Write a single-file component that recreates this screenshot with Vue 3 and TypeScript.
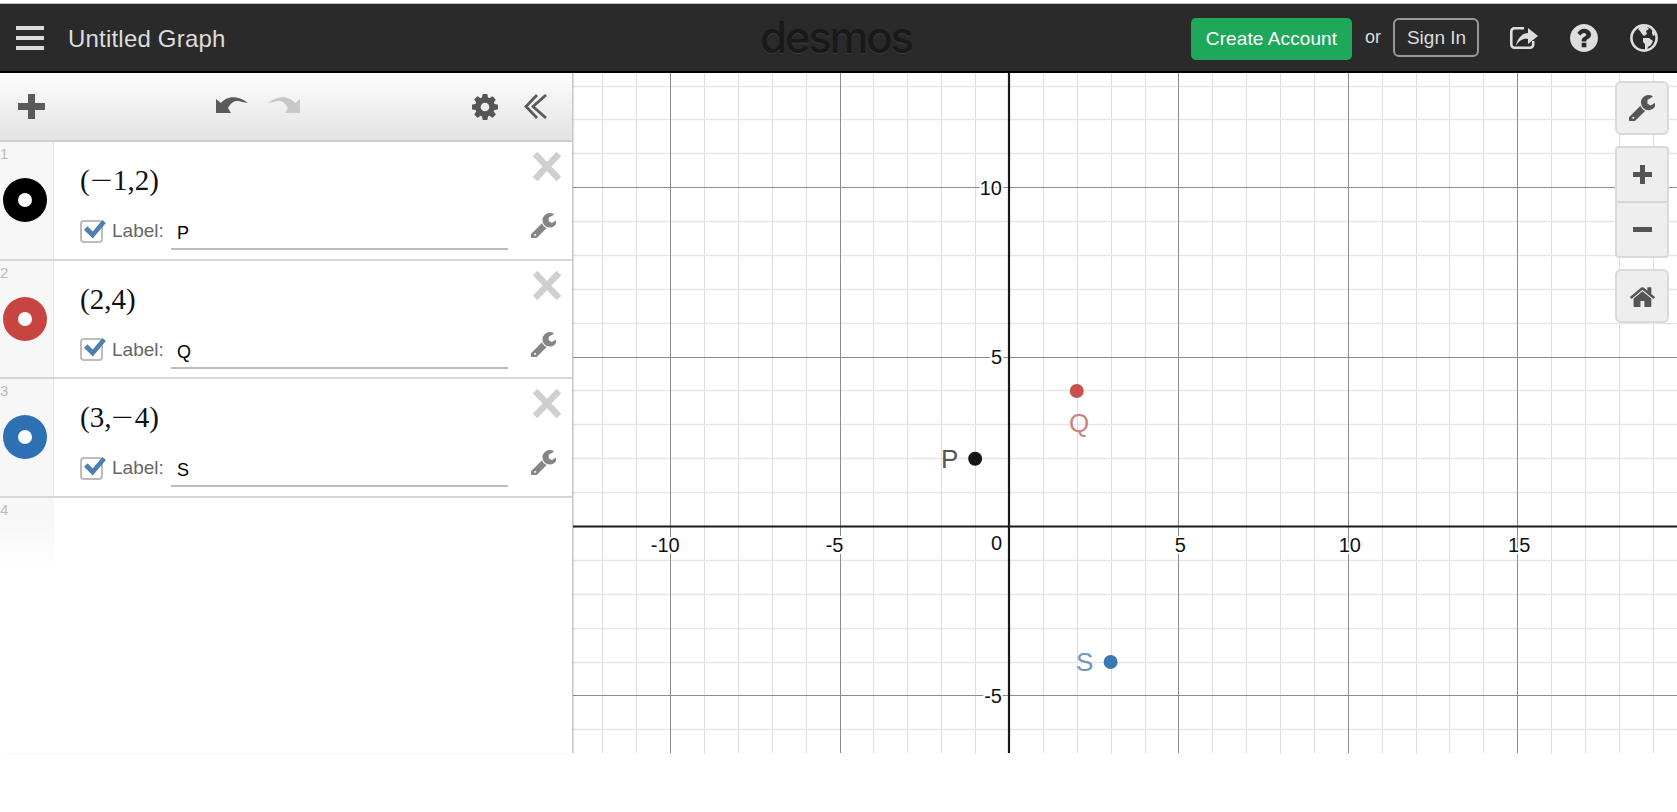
<script setup lang="ts">
interface Row { n: number; color: string; before: string; neg: boolean; after: string; label: string }
const rows: Row[] = [
  { n: 1, color: '#000000', before: '(', neg: true, after: '1,2)', label: 'P' },
  { n: 2, color: '#c74440', before: '(2,4)', neg: false, after: '', label: 'Q' },
  { n: 3, color: '#2d70b3', before: '(3,', neg: true, after: '4)', label: 'S' },
]
const WRENCH = 'M448 1472q0-26-19-45t-45-19-45 19-19 45 19 45 45 19 45-19 19-45zm644-420l-682 682q-37 37-90 37-52 0-91-37l-106-108q-38-36-38-90 0-53 38-91l681-681q39 98 114.5 173.5t173.5 114.5zm634-435q0 39-23 106-47 134-164.5 217.5t-258.5 83.5q-185 0-316.5-131.5t-131.5-316.5 131.5-316.5 316.5-131.5q58 0 121.5 16.5t107.5 46.5q16 11 16 28t-16 28l-293 169v224l193 107q5-3 79-48.5t135.5-81 70.5-35.5q15 0 23.5 10t8.5 25z'
const GEAR = 'M1152 896q0-106-75-181t-181-75-181 75-75 181 75 181 181 75 181-75 75-181zm512-109v222q0 12-8 23t-20 13l-185 28q-19 54-39 91 35 50 107 138 10 12 10 25t-9 23q-27 37-99 108t-94 71q-12 0-26-9l-138-108q-44 23-91 38-16 136-29 186-7 28-36 28h-222q-14 0-24.5-8.5t-11.5-21.5l-28-184q-49-16-90-37l-141 107q-10 9-25 9-14 0-25-11-126-114-165-168-7-10-7-23 0-12 8-23 15-21 51-66.5t54-70.5q-27-50-41-99l-183-27q-13-2-21-12.5t-8-23.5v-222q0-12 8-23t19-13l186-28q14-46 39-92-40-57-107-138-10-12-10-24 0-10 9-23 26-36 98.5-107.5t94.5-71.5q13 0 26 10l138 107q44-23 91-38 16-136 29-186 7-28 36-28h222q14 0 24.5 8.5t11.5 21.5l28 184q49 16 90 37l142-107q9-9 24-9 13 0 25 10 129 119 165 170 7 8 7 22 0 12-8 23-15 21-51 66.5t-54 70.5q26 50 41 98l183 28q13 2 21 12.5t8 23.5z'
const HOME = 'M1472 992v480q0 26-19 45t-45 19h-384v-384h-256v384h-384q-26 0-45-19t-19-45v-480q0-1 .5-3t.5-3l575-474 575 474q1 2 1 6zm223-69l-62 74q-8 9-21 11h-3q-13 0-21-7l-692-577-692 577q-12 8-24 7-13-2-21-11l-62-74q-8-10-7-23.5t11-21.5l719-599q32-26 76-26t76 26l244 204v-195q0-14 9-23t23-9h192q14 0 23 9t9 23v408l219 182q10 8 11 21.5t-7 23.5z'
const HELP = 'M1024 1376v-192q0-14-9-23t-23-9h-192q-14 0-23 9t-9 23v192q0 14 9 23t23 9h192q14 0 23-9t9-23zm256-672q0-88-55.5-163t-138.5-116-170-41q-243 0-371 213-15 24 8 42l132 100q7 6 19 6 16 0 25-12 53-68 86-92 34-24 86-24 48 0 85.5 26t37.5 59q0 38-20 61t-68 45q-63 28-115.5 86.5t-52.5 125.5v36q0 14 9 23t23 9h192q14 0 23-9t9-23q0-19 21.5-49.5t54.5-49.5q32-18 49-28.5t46-35 44.5-48 28-60.5 12.5-81zm384 192q0 209-103 385.5t-279.5 279.5-385.5 103-385.5-103-279.5-279.5-103-385.5 103-385.5 279.5-279.5 385.5-103 385.5 103 279.5 279.5 103 385.5z'

const W = 1104
const H = 680
const OX = 436
const OY = 453.5
const U = 33.88
const sx = (v: number) => Math.round(OX + v * U) + 0.5
const sy = (v: number) => Math.floor(OY - v * U) + 0.5
const range = (a: number, b: number) => Array.from({ length: b - a + 1 }, (_, i) => a + i)
const xs = range(-13, 19).filter((v) => v !== 0)
const ys = range(-6, 13).filter((v) => v !== 0)
const minorX = xs.filter((v) => v % 5 !== 0)
const majorX = xs.filter((v) => v % 5 === 0)
const minorY = ys.filter((v) => v % 5 !== 0)
const majorY = ys.filter((v) => v % 5 === 0)
const xLabels = [-10, -5, 5, 10, 15]
const yLabels = [10, 5, -5]
const px = (v: number) => OX + v * U
const py = (v: number) => OY - v * U
</script>

<template>
  <div class="page">
    <div class="strip"></div>
    <header class="topbar">
      <div class="burger"><i></i><i></i><i></i></div>
      <div class="title">Untitled Graph</div>
      <div class="logo">desmos</div>
      <div class="account">
        <button class="create">Create Account</button>
        <span class="or">or</span>
        <button class="signin">Sign In</button>
        <svg class="ticon share" viewBox="0 0 28 22">
          <path fill="none" stroke="#dedede" stroke-width="2.600" d="M14 1.300H4.500a3.200 3.200 0 0 0-3.200 3.200v13a3.200 3.200 0 0 0 3.200 3.200H20a3.200 3.200 0 0 0 3.200-3.200V14"/>
          <path fill="#dedede" d="M6 19C7 12 12 6 18 6V1l10 8-10 8v-5C14 11 9 13 6 19z"/>
        </svg>
        <svg class="ticon help" viewBox="128 128 1536 1536"><path fill="#dedede" :d="HELP"/></svg>
        <svg class="ticon globe" viewBox="0 0 28 28">
          <circle cx="14" cy="14" r="12.600" fill="none" stroke="#dedede" stroke-width="2.600"/>
          <path fill="#dedede" d="M11 2l6 1 2 2-3 2 1 3-3 2-2-2-2-3-2-2zM13 14h6l4 3-2 4-3 2-1 3h-2v-6l-2-2zM22 6l2 2 1 3-2 1-1-3z"/>
        </svg>
      </div>
    </header>

    <main class="main">
      <aside class="side">
        <div class="tools">
          <svg class="plus" viewBox="0 0 27 25"><path fill="#5a5a5a" d="M10 0h7v9h10v7H17v9h-7v-9H0V9h10z"/></svg>
          <div class="history">
            <svg class="arrow" viewBox="0 0 32 18"><path fill="#5a5a5a" d="M0 17V3l5 4C10 1 20-2 32 7l-6-1C22 4 16 4 12 12l3 5z"/></svg>
            <svg class="arrow" viewBox="0 0 32 18"><path fill="#c8c8c8" d="M32 17V3l-5 4C22 1 12-2 0 7l6-1c4-2 10-2 14 6l-3 5z"/></svg>
          </div>
          <svg class="gear" viewBox="128 128 1536 1536"><path fill="#555" :d="GEAR"/></svg>
          <svg class="chev" viewBox="0 0 23 25"><path fill="none" stroke="#5a5a5a" stroke-width="2.800" d="M13 1L2 12.500 13 24M22 1L9 12.500 22 24"/></svg>
        </div>
        <div v-for="row in rows" :key="row.n" class="row">
          <div class="gutter">
            <span class="num">{{ row.n }}</span>
            <span class="swatch" :style="{ background: row.color }"></span>
          </div>
          <div class="body">
            <div class="expr">{{ row.before }}<span v-if="row.neg" class="neg">−</span>{{ row.after }}</div>
            <div class="labelrow">
              <span class="check">
                <svg viewBox="0 0 26 24"><path fill="#4c80b0" d="M1 11l4-4 6 6L22 0l4 3.500L11 21z"/></svg>
              </span>
              <span class="ltext">Label:</span>
              <span class="linput">{{ row.label }}</span>
            </div>
            <svg class="close" viewBox="0 0 28 29"><path stroke="#cfcfcf" stroke-width="6.500" d="M2 2l24 25M26 2L2 27"/></svg>
            <svg class="rwrench" viewBox="128 128 1536 1536"><path fill="#858585" :d="WRENCH"/></svg>
          </div>
        </div>
        <div class="row empty">
          <div class="gutter"><span class="num">4</span></div>
        </div>
      </aside>

      <section class="graph">
        <svg class="plot" :viewBox="`0 0 ${W} ${H}`" :width="W" :height="H">
          <line v-for="v in minorX" :key="'mx' + v" class="minor" :x1="sx(v)" :x2="sx(v)" y1="0" :y2="H"/>
          <line v-for="v in minorY" :key="'my' + v" class="minor h" x1="0" :x2="W" :y1="sy(v)" :y2="sy(v)"/>
          <line v-for="v in majorX" :key="'Mx' + v" class="major" :x1="sx(v)" :x2="sx(v)" y1="0" :y2="H"/>
          <line v-for="v in majorY" :key="'My' + v" class="major" x1="0" :x2="W" :y1="sy(v)" :y2="sy(v)"/>
          <line class="axis" :x1="OX" :x2="OX" y1="0" :y2="H"/>
          <line class="axis" x1="0" :x2="W" :y1="OY" :y2="OY"/>
          <text v-for="v in xLabels" :key="'xl' + v" class="tick" text-anchor="middle" :x="px(v) + (v < 0 ? -5 : 2)" :y="OY + 25.500">{{ v }}</text>
          <text v-for="v in yLabels" :key="'yl' + v" class="tick" text-anchor="end" :x="OX - 7" :y="py(v) + 7">{{ v }}</text>
          <text class="tick" text-anchor="end" :x="OX - 7" :y="OY + 23">0</text>

          <circle :cx="px(-1)" :cy="py(2)" r="7" fill="#161616"/>
          <circle :cx="px(2)" :cy="py(4)" r="7" fill="#c9504c"/>
          <circle :cx="px(3)" :cy="py(-4)" r="7" fill="#3c78b5"/>
          <text class="plabel" :x="368" :y="395" fill="#555">P</text>
          <text class="plabel" :x="496" :y="359" fill="#c98583">Q</text>
          <text class="plabel" :x="503" :y="598" fill="#6e97c0">S</text>
        </svg>
        <div class="controls">
          <div class="ctl single">
            <svg class="cw" viewBox="128 128 1536 1536"><path fill="#555" :d="WRENCH"/></svg>
          </div>
          <div class="ctl zoom">
            <div class="zbtn first">
              <svg class="zi" viewBox="0 0 19 19"><path fill="#555" d="M7 0h5v7h7v5h-7v7H7v-7H0V7h7z"/></svg>
            </div>
            <div class="zbtn minus">
              <svg class="zi" viewBox="0 0 19 19"><path fill="#555" d="M0 7h19v5H0z"/></svg>
            </div>
          </div>
          <div class="ctl single">
            <svg class="ch" viewBox="90 180 1620 1360"><path fill="#555" :d="HOME"/></svg>
          </div>
        </div>
      </section>
    </main>
  </div>
</template>

<style>
html, body { margin: 0; background: #fff; overflow: hidden; }
</style>

<style scoped>
.page {
  width: 1677px;
  height: 812px;
  font-family: "Liberation Sans", Arial, sans-serif;
  background: #fff;
  overflow: hidden;
}
.strip {
  height: 3px;
  background: #fff;
  border-bottom: 1px solid #bdbdbd;
}
.topbar {
  position: relative;
  height: 67px;
  background: #2a2a2a;
  border-bottom: 2px solid #000;
  display: flex;
  align-items: center;
  color: #ddd;
}
.burger {
  margin-left: 16px;
  width: 28px;
  display: flex;
  flex-direction: column;
  gap: 6px;
}
.burger i {
  display: block;
  height: 4px;
  background: #dcdcdc;
}
.title {
  margin-left: 24px;
  margin-top: 2px;
  font-size: 24px;
  letter-spacing: 0.2px;
  color: #dcdcdc;
}
.logo {
  position: absolute;
  left: 760px;
  top: 6px;
  font-family: Inter, sans-serif;
  font-size: 44px;
  font-weight: 500;
  letter-spacing: -2.400px;
  line-height: 54px;
  color: #191919;
  text-shadow: 0 1px 0 #3a3a3a;
}
.account {
  margin-left: auto;
  display: flex;
  align-items: center;
}
.create {
  width: 161px;
  height: 42px;
  margin-top: 2px;
  padding: 0;
  border: 0;
  border-radius: 5px;
  background: #1ea95a;
  color: #fff;
  font: 19px "Liberation Sans", Arial, sans-serif;
  letter-spacing: 0.1px;
}
.or {
  margin-left: 13px;
  font-size: 18px;
  color: #ddd;
}
.signin {
  width: 86px;
  height: 39px;
  margin-left: 12px;
  padding: 0 0 0 1px;
  background: transparent;
  border: 2px solid #999;
  border-radius: 6px;
  color: #ddd;
  font: 19px "Liberation Sans", Arial, sans-serif;
}
.ticon { display: block; }
.share { width: 28px; height: 22px; margin-left: 31px; margin-right: 32px; }
.help { width: 28px; height: 28px; }
.globe { width: 28px; height: 28px; margin-left: 32px; margin-right: 19px; }

.main {
  display: flex;
  height: 680px;
}
.side {
  width: 572px;
  flex: none;
  border-right: 1px solid #c8c8c8;
  box-shadow: 1px 0 1px rgba(0, 0, 0, 0.12);
  position: relative;
  z-index: 1;
  display: flex;
  flex-direction: column;
  background: #fff;
}
.tools {
  height: 67px;
  flex: none;
  border-bottom: 2px solid #cdcdcd;
  background: linear-gradient(#fdfdfd, #e3e3e3);
  display: flex;
  align-items: center;
  padding-left: 18px;
}
.plus { width: 27px; height: 25px; }
.history {
  margin-left: 171px;
  display: flex;
  gap: 20px;
}
.arrow { width: 32px; height: 18px; display: block; margin-top: -3px; }
.gear { width: 26px; height: 26px; margin-left: 172px; }
.chev { width: 23px; height: 25px; margin-left: 26px; }

.row {
  height: 118.6px;
  flex: none;
  box-sizing: border-box;
  border-bottom: 2px solid #d6d6d6;
  display: flex;
}
.gutter {
  position: relative;
  width: 53px;
  flex: none;
  background: #f7f7f7;
  border-right: 1px solid #e6e6e6;
}
.num {
  position: absolute;
  left: 0;
  top: 3px;
  font-size: 15px;
  color: #bbb;
}
.swatch {
  position: absolute;
  left: 3px;
  top: 36px;
  width: 44px;
  height: 44px;
  border-radius: 50%;
}
.swatch::after {
  content: "";
  position: absolute;
  left: 15px;
  top: 15px;
  width: 14px;
  height: 14px;
  border-radius: 50%;
  background: #fff;
}
.body {
  position: relative;
  flex: 1;
  padding-left: 26px;
}
.expr {
  margin-top: 22px;
  height: 32px;
  font-family: "Liberation Serif", serif;
  font-size: 29px;
  line-height: 32px;
  color: #111;
}
.neg {
  display: inline-block;
  margin: 0 4px 0 3px;
  transform: scaleX(1.35);
  font-weight: 400;
}
.labelrow {
  margin-top: 23px;
  display: flex;
  align-items: center;
  height: 24px;
}
.check {
  position: relative;
  width: 23px;
  height: 23px;
  box-sizing: border-box;
  border: 2px solid #bcbcbc;
  border-radius: 4px;
  background: #fff;
}
.check svg {
  position: absolute;
  left: 0;
  top: -2px;
  width: 25px;
  height: 21px;
}
.ltext {
  margin-left: 9px;
  width: 59px;
  font-size: 19px;
  color: #666;
}
.linput {
  box-sizing: border-box;
  width: 337px;
  height: 31px;
  padding: 2px 0 0 6px;
  margin-top: 7px;
  border-bottom: 2px solid #bcbcbc;
  font-size: 18px;
  line-height: 24px;
  color: #000;
}
.close {
  position: absolute;
  left: 479px;
  top: 10px;
  width: 28px;
  height: 29px;
}
.rwrench {
  position: absolute;
  left: 477px;
  top: 71px;
  width: 25px;
  height: 25px;
}
.empty { border-bottom: 0; height: 72px; }
.empty .gutter { background: linear-gradient(#f7f7f7 30%, #fff); border-right-color: transparent; }

.graph {
  position: relative;
  flex: 1;
  overflow: hidden;
}
.plot { display: block; }
.minor { stroke: #dedede; stroke-width: 1; }
.minor.h { stroke: #e6e6e6; stroke-width: 1.500; }
.major { stroke: #8c8c8c; stroke-width: 1; }
.axis { stroke: #1a1a1a; stroke-width: 2.200; }
.tick {
  font-size: 20px;
  fill: #111;
  stroke: #fff;
  stroke-width: 4px;
  paint-order: stroke;
}
.plabel {
  font-size: 26px;
}
.controls {
  position: absolute;
  left: 1042px;
  top: 8px;
  width: 54px;
  display: flex;
  flex-direction: column;
  gap: 11px;
}
.ctl {
  box-sizing: border-box;
  background: #eee;
  border: 2px solid #dadada;
  border-radius: 6px;
}
.single {
  height: 54px;
  display: flex;
  align-items: center;
  justify-content: center;
}
.zoom { height: 112px; border-radius: 4px; }
.zbtn {
  height: 54px;
  box-sizing: border-box;
  display: flex;
  align-items: center;
  justify-content: center;
}
.zbtn.first { height: 53px; }
.minus { border-top: 2px solid #d6d6d6; }
.zi { width: 19px; height: 19px; }
.cw { width: 26px; height: 26px; }
.ch { width: 25px; height: 21px; }
</style>
